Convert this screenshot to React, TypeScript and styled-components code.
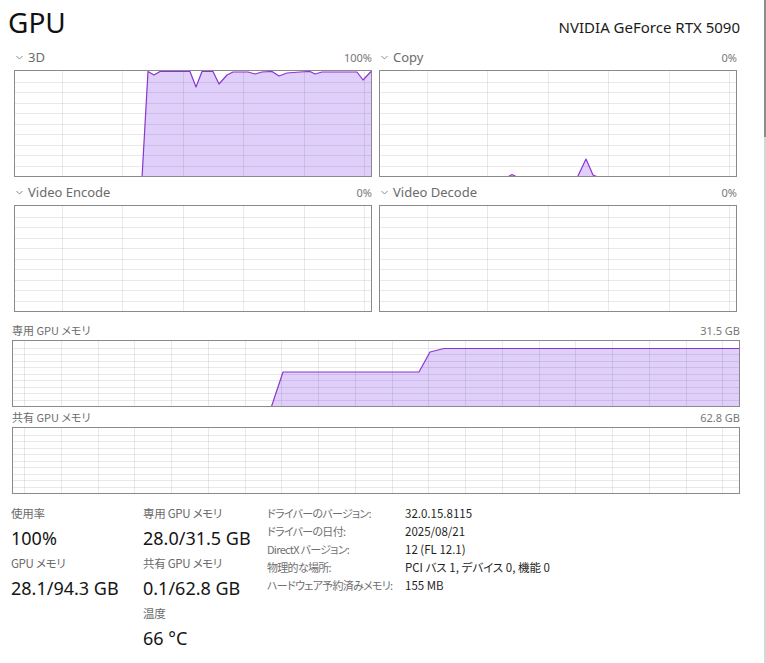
import React from 'react';
import styled, { createGlobalStyle } from 'styled-components';

type Pt = [number, number];

const GlobalStyle = createGlobalStyle`
  html, body { margin: 0; padding: 0; background: #fff; }
  body {
    font-family: "Noto Sans", "Noto Sans CJK JP", sans-serif;
    color: #1a1a1a;
    overflow: hidden;
  }
`;

const Window = styled.div`
  display: flex;
  width: 766px;
  height: 663px;
  background: #fff;
`;

const Content = styled.main`
  flex: 1;
  min-width: 0;
`;

const ScrollTrack = styled.div`
  width: 2px;
  background: #d6d6d6;
  display: flex;
  flex-direction: column;
`;

const ScrollThumb = styled.div`
  height: 137px;
  background: #8c8c8c;
`;

const Header = styled.header`
  display: flex;
  justify-content: space-between;
  align-items: baseline;
  margin-top: 8px;
  padding: 0 24px 0 8px;
`;

const PageTitle = styled.h1`
  margin: 0;
  font-size: 28px;
  line-height: 28px;
  font-weight: 400;
  color: #111;
`;

const DeviceName = styled.div`
  font-size: 15px;
  color: #1a1a1a;
`;

const EngineGrid = styled.section`
  display: grid;
  grid-template-columns: 358px 358px;
  column-gap: 7px;
  row-gap: 8px;
  margin: 13px 0 0 14px;
`;

const Panel = styled.div`
  display: flex;
  flex-direction: column;
`;

const PanelHead = styled.div<{ $small?: boolean }>`
  display: flex;
  justify-content: space-between;
  align-items: center;
  height: ${p => (p.$small ? 12 : 14)}px;
  margin-bottom: ${p => (p.$small ? 4 : 6)}px;
  color: #6b6b6b;
`;

const PanelTitle = styled.span<{ $small?: boolean }>`
  display: flex;
  align-items: center;
  gap: 5px;
  font-size: ${p => (p.$small ? 11 : 13)}px;
  font-family: ${p => (p.$small ? '"Noto Sans CJK JP", "Noto Sans", sans-serif' : '"Noto Sans", sans-serif')};
  font-feature-settings: "palt";
`;

const PanelValue = styled.span`
  font-size: 11px;
  color: #777;
`;

const ChartFrame = styled.div<{ $w: number; $h: number }>`
  width: ${p => p.$w}px;
  height: ${p => p.$h}px;
  border: 1px solid #8a8a8a;
  svg { display: block; }
`;

const MemorySection = styled.section`
  display: flex;
  flex-direction: column;
  gap: 4px;
  width: 728px;
  margin: 12px 0 0 12px;
`;

const Stats = styled.section`
  display: grid;
  grid-template-columns: 132px 124px auto;
  margin: 10px 0 0 11px;
`;

const StatColumn = styled.div`
  display: flex;
  flex-direction: column;
`;

const StatLabel = styled.div`
  height: 18px;
  line-height: 18px;
  font-size: 11.5px;
  letter-spacing: -0.3px;
  color: #6b6b6b;
  font-family: "Noto Sans CJK JP", "Noto Sans", sans-serif;
  font-feature-settings: "palt";
`;

const StatValue = styled.div`
  height: 32px;
  line-height: 32px;
  font-size: 18px;
  color: #151515;
`;

const DetailGrid = styled.dl`
  display: grid;
  grid-template-columns: 138px auto;
  grid-auto-rows: 18px;
  align-items: center;
  margin: 0;
  font-family: "Noto Sans CJK JP", "Noto Sans", sans-serif;
  font-feature-settings: "palt";
`;

const DetailKey = styled.dt`
  font-size: 11px;
  color: #6f6f6f;
  letter-spacing: -0.7px;
  white-space: nowrap;
`;

const DetailVal = styled.dd`
  margin: 0;
  font-size: 11.5px;
  color: #1f1f1f;
`;

const Chevron = () => (
  <svg width="7" height="5" viewBox="0 0 7 5" style={{ marginLeft: 2 }}>
    <polyline points="0.5,1 3.5,4 6.5,1" fill="none" stroke="#8a8a8a" strokeWidth="1" />
  </svg>
);

interface ChartProps {
  w: number;
  h: number;
  rows: number;
  colOffset: number;
  colStep: number;
  points?: Pt[];
}

const Chart: React.FC<ChartProps> = ({ w, h, rows, colOffset, colStep, points }) => {
  const hLines = Array.from({ length: rows - 1 }, (_, i) => Math.round(((i + 1) * h) / rows) + 0.5);
  const vLines: number[] = [];
  for (let x = colOffset; x < w; x += colStep) vLines.push(Math.round(x) + 0.5);
  const line = points ? points.map(([x, y]) => `${x},${y}`).join(' ') : '';
  const area = points
    ? `${points[0][0]},${h + 2} ${line} ${points[points.length - 1][0]},${h + 2}`
    : '';
  return (
    <ChartFrame $w={w} $h={h}>
      <svg width={w} height={h}>
        {points && <polygon points={area} fill="#e0cffb" />}
        {hLines.map(y => (
          <line key={'h' + y} x1={0} x2={w} y1={y} y2={y} stroke="rgba(0,0,0,0.085)" />
        ))}
        {vLines.map(x => (
          <line key={'v' + x} x1={x} x2={x} y1={0} y2={h} stroke="rgba(0,0,0,0.085)" />
        ))}
        {points && (
          <polyline points={line} fill="none" stroke="#8a35cf" strokeWidth={1.2} strokeLinejoin="round" />
        )}
      </svg>
    </ChartFrame>
  );
};

const load3d: Pt[] = [
  [127, 107], [133, 0.5], [139, 4], [145, 0.5], [175, 0.5], [181, 16], [187, 0.5],
  [198, 0.5], [204, 13], [212, 4], [218, 1], [233, 1], [240, 3], [247, 1], [257, 0.5],
  [264, 5], [272, 2], [285, 1], [295, 0.5], [300, 3], [307, 1], [320, 1], [342, 1],
  [348, 9], [356, 0.5],
];

const loadCopy: Pt[] = [
  [0, 107], [126, 107], [132, 103.5], [139, 107], [197, 107], [206, 88], [213, 104],
  [220, 107], [356, 107],
];

const dedicated: Pt[] = [
  [258, 67], [270, 31], [406, 31], [417, 11], [431, 7.5], [726, 7.5],
];

const engines = [
  { name: '3D', value: '100%', points: load3d },
  { name: 'Copy', value: '0%', points: loadCopy },
  { name: 'Video Encode', value: '0%' },
  { name: 'Video Decode', value: '0%' },
];

const memories = [
  { name: '専用 GPU メモリ', value: '31.5 GB', points: dedicated },
  { name: '共有 GPU メモリ', value: '62.8 GB' },
];

const statColumns = [
  [
    { label: '使用率', value: '100%' },
    { label: 'GPU メモリ', value: '28.1/94.3 GB' },
  ],
  [
    { label: '専用 GPU メモリ', value: '28.0/31.5 GB' },
    { label: '共有 GPU メモリ', value: '0.1/62.8 GB' },
    { label: '温度', value: '66 °C' },
  ],
];

const details = [
  ['ドライバーのバージョン:', '32.0.15.8115'],
  ['ドライバーの日付:', '2025/08/21'],
  ['DirectX バージョン:', '12 (FL 12.1)'],
  ['物理的な場所:', 'PCI バス 1, デバイス 0, 機能 0'],
  ['ハードウェア予約済みメモリ:', '155 MB'],
];

export default function App() {
  return (
    <>
      <GlobalStyle />
      <Window>
        <Content>
          <Header>
            <PageTitle>GPU</PageTitle>
            <DeviceName>NVIDIA GeForce RTX 5090</DeviceName>
          </Header>

          <EngineGrid>
            {engines.map(e => (
              <Panel key={e.name}>
                <PanelHead>
                  <PanelTitle>
                    <Chevron />
                    {e.name}
                  </PanelTitle>
                  <PanelValue>{e.value}</PanelValue>
                </PanelHead>
                <Chart w={356} h={105} rows={10} colOffset={47} colStep={60.4} points={e.points} />
              </Panel>
            ))}
          </EngineGrid>

          <MemorySection>
            {memories.map(m => (
              <Panel key={m.name}>
                <PanelHead $small>
                  <PanelTitle $small>{m.name}</PanelTitle>
                  <PanelValue>{m.value}</PanelValue>
                </PanelHead>
                <Chart w={726} h={65} rows={10} colOffset={11} colStep={36.75} points={m.points} />
              </Panel>
            ))}
          </MemorySection>

          <Stats>
            {statColumns.map((col, i) => (
              <StatColumn key={i}>
                {col.map(s => (
                  <div key={s.label}>
                    <StatLabel>{s.label}</StatLabel>
                    <StatValue>{s.value}</StatValue>
                  </div>
                ))}
              </StatColumn>
            ))}
            <DetailGrid>
              {details.map(([k, v]) => (
                <React.Fragment key={k}>
                  <DetailKey>{k}</DetailKey>
                  <DetailVal>{v}</DetailVal>
                </React.Fragment>
              ))}
            </DetailGrid>
          </Stats>
        </Content>
        <ScrollTrack>
          <ScrollThumb />
        </ScrollTrack>
      </Window>
    </>
  );
}
